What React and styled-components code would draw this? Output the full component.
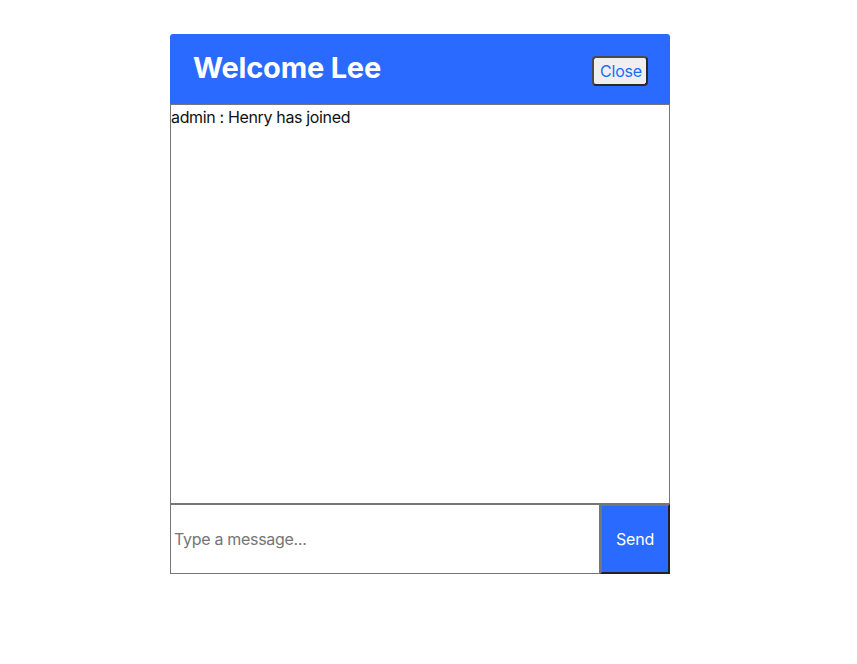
import React from "react"
import styled, { createGlobalStyle } from "styled-components"

const GlobalStyle = createGlobalStyle`
  body {
    margin: 0;
    background: #ffffff;
    font-family: Inter, "Noto Sans", sans-serif;
  }
`

const Page = styled.div`
  padding: 34px 0 0 170px;
`

const Chat = styled.div`
  width: 500px;
  display: flex;
  flex-direction: column;
`

const Header = styled.div`
  height: 70px;
  box-sizing: border-box;
  background: #2a6aff;
  border-radius: 3px 3px 0 0;
  display: flex;
  align-items: center;
  justify-content: space-between;
  padding: 0 22px 0 23px;
`

const Title = styled.h1`
  margin: 0 0 3px 0;
  color: #ffffff;
  font-size: 29px;
  font-weight: 700;
  letter-spacing: -0.2px;
`

const CloseButton = styled.button`
  font-family: Inter, "Noto Sans", sans-serif;
  font-size: 16px;
  letter-spacing: -0.2px;
  color: #1a6cff;
  background: #efefef;
  border: 2px solid #2a2a2a;
  border-top-color: #4a4a4a;
  border-left-color: #4a4a4a;
  border-radius: 4px;
  padding: 0 6px;
  margin-top: 4px;
  width: 56px;
  height: 30px;
  line-height: 1;
`

const Messages = styled.div`
  height: 400px;
  box-sizing: border-box;
  border: 1px solid #767676;
  overflow-y: auto;
`

const Message = styled.div`
  font-size: 16px;
  letter-spacing: -0.35px;
  color: #111;
  line-height: 24px;
`

const Composer = styled.form`
  display: flex;
  height: 70px;
  margin: 0;
`

const Input = styled.input`
  flex: 1;
  box-sizing: border-box;
  height: 70px;
  border: 1px solid #767676;
  padding: 0 3px;
  font-family: Inter, "Noto Sans", sans-serif;
  font-size: 16px;
  letter-spacing: -0.3px;
  outline: none;
  &::placeholder {
    color: #757575;
  }
`

const SendButton = styled.button`
  width: 70px;
  height: 70px;
  box-sizing: border-box;
  background: #2a6aff;
  color: #ffffff;
  font-family: Inter, "Noto Sans", sans-serif;
  font-size: 16px;
  letter-spacing: -0.2px;
  border: 2px solid #222;
  border-top-color: #767676;
  border-left-color: #767676;
  padding: 0;
`

const App = () => (
  <Page>
    <GlobalStyle />
    <Chat>
      <Header>
        <Title>Welcome Lee</Title>
        <CloseButton type="button">Close</CloseButton>
      </Header>
      <Messages>
        <Message>admin : Henry has joined</Message>
      </Messages>
      <Composer onSubmit={e => e.preventDefault()}>
        <Input placeholder="Type a message..." />
        <SendButton type="submit">Send</SendButton>
      </Composer>
    </Chat>
  </Page>
)

export default App
